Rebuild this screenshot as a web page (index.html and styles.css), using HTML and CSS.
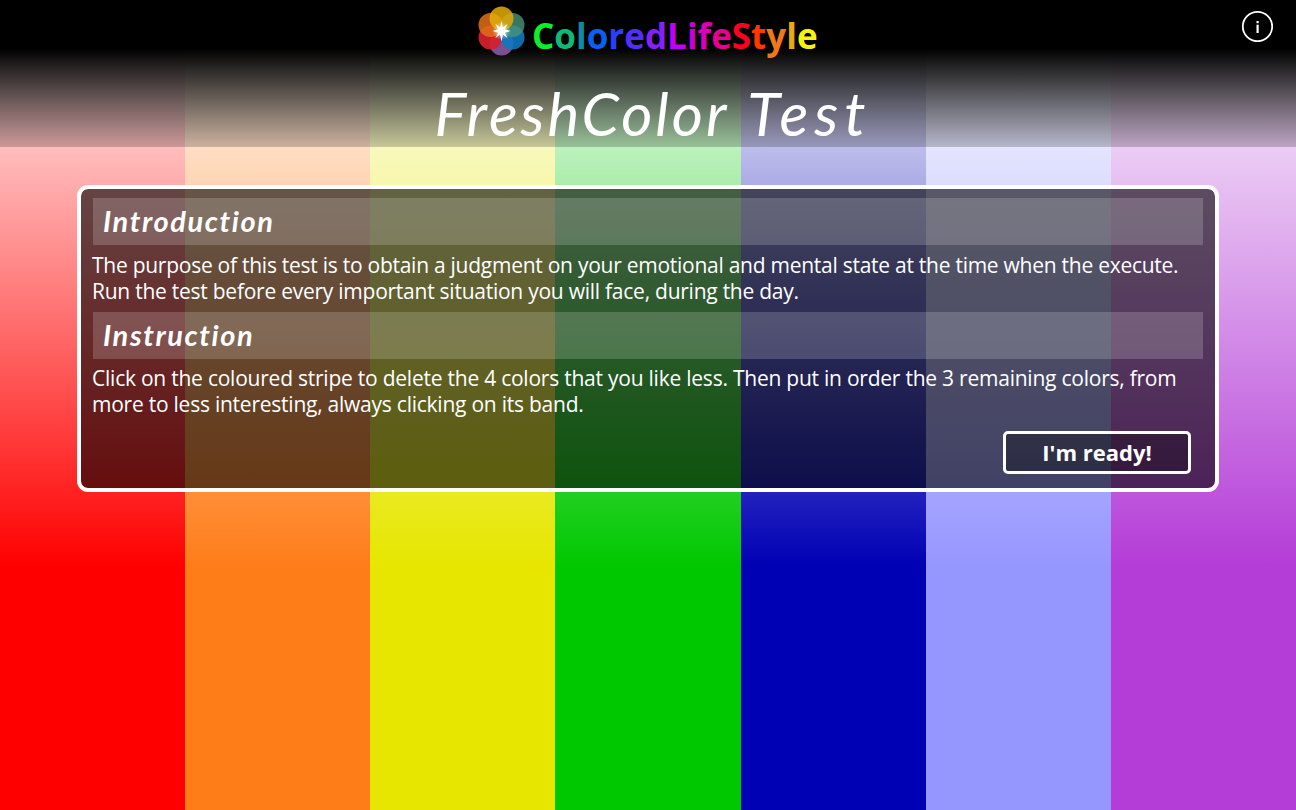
FILE: index.html
```
<!DOCTYPE html>
<html lang="en">
<head>
    <meta charset="UTF-8">
    <meta name="viewport" content="width=device-width, initial-scale=1.0">
    <title>FreshColor Test</title>
    <link rel="stylesheet" href="styles.css">
</head>
<body>
    <div class="stripes">
        <div class="stripe red"></div>
        <div class="stripe orange"></div>
        <div class="stripe yellow"></div>
        <div class="stripe green"></div>
        <div class="stripe blue"></div>
        <div class="stripe lavender"></div>
        <div class="stripe purple"></div>
    </div>

    <div class="page">
        <header>
            <div class="brand">
                <svg class="logo" width="50" height="52" viewBox="0 0 50 52">
                    <defs>
                        <radialGradient id="shine">
                            <stop offset="0" stop-color="#fff" stop-opacity="0.8"/>
                            <stop offset="1" stop-color="#fff" stop-opacity="0"/>
                        </radialGradient>
                    </defs>
                    <circle cx="25.500" cy="38.500" r="12" fill="#7a5090"/>
                    <circle cx="14.500" cy="32.500" r="12" fill="#d4202c" fill-opacity="0.93"/>
                    <circle cx="36.500" cy="32.500" r="12" fill="#0e78c0" fill-opacity="0.9"/>
                    <circle cx="14.500" cy="20" r="12" fill="#e07018" fill-opacity="0.85"/>
                    <circle cx="36.500" cy="20" r="12" fill="#4a9478" fill-opacity="0.8"/>
                    <circle cx="25.500" cy="13.500" r="12" fill="#e4ac08" fill-opacity="0.85"/>
                    <circle cx="25.500" cy="26" r="9" fill="url(#shine)"/>
                    <path d="M25.500 15.500l1.400 7.100 4.800-3.800-2.800 5.400 5.600 1.800-5.600 1.800 2.800 5.400-4.800-3.800L25.500 36.500l-1.400-7.100-4.800 3.800 2.800-5.400L16.500 26l5.600-1.800-2.800-5.400 4.800 3.800z" fill="#fff"/>
                </svg>
                <div class="brand-name"><span class="c1">C</span><span class="c2">o</span><span class="c3">l</span><span class="c4">o</span><span class="c5">r</span><span class="c6">e</span><span class="c7">d</span><span class="c8">L</span><span class="c9">i</span><span class="c10">f</span><span class="c11">e</span><span class="c12">S</span><span class="c13">t</span><span class="c14">y</span><span class="c15">l</span><span class="c16">e</span></div>
            </div>
            <h1>FreshColor <span class="wide">Test</span></h1>
            <button class="info" aria-label="Info">
                <svg width="32" height="32" viewBox="0 0 32 32">
                    <circle cx="16.500" cy="16.500" r="14.700" fill="none" stroke="#fff" stroke-width="1.800"/>
                    <rect x="15.500" y="11" width="2.200" height="2.200" fill="#fff"/>
                    <rect x="15.500" y="14.700" width="2.200" height="8.300" fill="#fff"/>
                </svg>
            </button>
        </header>

        <main class="panel">
            <h2>Introduction</h2>
            <p>
                <span class="line l1">The purpose of this test is to obtain a judgment on your emotional and mental state at the time when the execute.</span>
                <span class="line l2">Run the test before every important situation you will face, during the day.</span>
            </p>
            <h2>Instruction</h2>
            <p>
                <span class="line l3">Click on the coloured stripe to delete the 4 colors that you like less. Then put in order the 3 remaining colors, from</span>
                <span class="line l4">more to less interesting, always clicking on its band.</span>
            </p>
            <button class="ready">I'm ready!</button>
        </main>
    </div>
</body>
</html>
```
FILE: styles.css
```
* {
    box-sizing: border-box;
}

body {
    margin: 0;
    height: 100vh;
    display: grid;
    overflow: hidden;
    font-family: "Open Sans", sans-serif;
    color: #fff;
}

.stripes, .page {
    grid-area: 1 / 1;
    min-width: 0;
}

.stripes {
    display: grid;
    grid-template-columns: repeat(7, 1fr);
}

.stripe {
    background: linear-gradient(#fff, var(--color) 70%);
}

.red { --color: #ff0000; }
.orange { --color: #ff7d19; }
.yellow { --color: #e6e600; }
.green { --color: #00c800; }
.blue { --color: #0000b4; }
.lavender { --color: #9696ff; }
.purple { --color: #b43cd7; }

header {
    position: relative;
    height: 147px;
    padding-top: 5px;
    background: linear-gradient(#000 33%, rgba(0, 0, 0, 0.2));
}

.brand {
    display: flex;
    justify-content: center;
    gap: 6px;
    height: 62px;
    padding-right: 3px;
}

.brand-name {
    width: 285px;
    font-size: 35px;
    font-weight: bold;
    line-height: 62px;
    white-space: nowrap;
}

.c1 { color: #0cf02c; }
.c2 { color: #12b878; }
.c3 { color: #1088a8; }
.c4 { color: #0a60f0; }
.c5 { color: #2840f8; }
.c6 { color: #5030f8; }
.c7 { color: #8420f8; }
.c8 { color: #c000ff; }
.c9 { color: #c800d8; }
.c10 { color: #d800b8; }
.c11 { color: #e80090; }
.c12 { color: #ff0020; }
.c13 { color: #ff3800; }
.c14 { color: #f07818; }
.c15 { color: #e8a818; }
.c16 { color: #f4f410; }

h1 {
    margin: 8px 0 0 10px;
    font-family: Lato, sans-serif;
    font-size: 60px;
    font-weight: normal;
    font-style: italic;
    line-height: 76px;
    letter-spacing: 3px;
    word-spacing: 2px;
    text-align: center;
    white-space: nowrap;
}

.wide {
    letter-spacing: 6px;
}

.info {
    position: absolute;
    top: 10px;
    right: 23px;
    padding: 0;
    border: none;
    background: none;
    cursor: pointer;
}

.info svg {
    display: block;
}

.panel {
    display: flex;
    flex-direction: column;
    height: 307px;
    margin: 38px 77px 0;
    padding: 9px 12px;
    border: 4px solid #fff;
    border-radius: 11px;
    background: rgba(0, 0, 0, 0.6);
    background-clip: padding-box;
}

h2 {
    height: 47px;
    margin: 0;
    padding-left: 10px;
    background: rgba(255, 255, 255, 0.18);
    font-family: Lato, sans-serif;
    font-size: 29px;
    font-style: italic;
    line-height: 45px;
    letter-spacing: 1.6px;
}

p {
    height: 66.500px;
    margin: 0 0 0 -1px;
    padding-top: 6.700px;
    font-size: 21px;
}

.line {
    display: block;
    line-height: 26px;
    white-space: nowrap;
}

.l1 { letter-spacing: -0.26px; }
.l2 { letter-spacing: -0.25px; }
.l3 { letter-spacing: -0.235px; }
.l4 { letter-spacing: -0.24px; }

.ready {
    align-self: flex-end;
    width: 188px;
    height: 43px;
    margin: 6px 12px 0 0;
    padding: 0 0 2px;
    border: 3px solid #fff;
    border-radius: 5px;
    background: rgba(0, 0, 0, 0.3);
    color: #fff;
    font-family: "Open Sans", sans-serif;
    font-size: 22px;
    font-weight: bold;
    cursor: pointer;
}
```
